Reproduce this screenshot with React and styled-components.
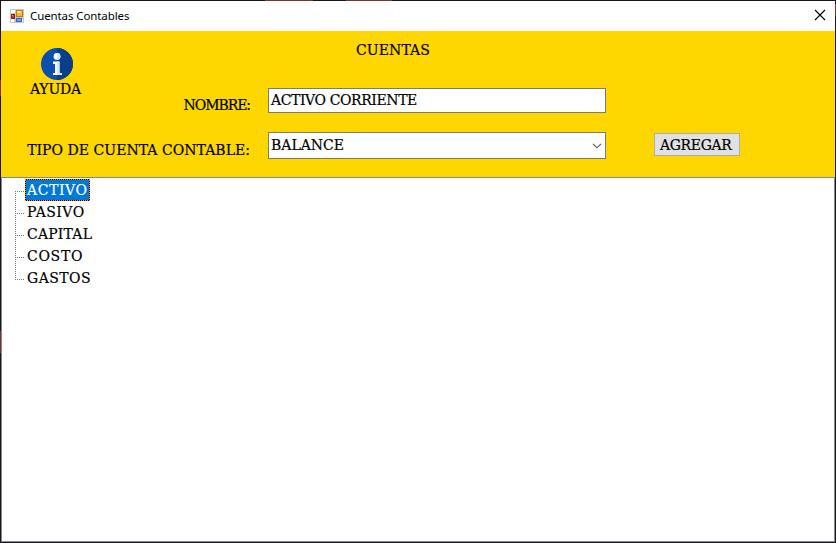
import React from "react";
import styled, { createGlobalStyle } from "styled-components";

const GlobalStyle = createGlobalStyle`
  * { box-sizing: border-box; }
  body { margin: 0; background: #19191d; }
`;

const Window = styled.main`
  width: 836px;
  height: 543px;
  padding: 1px;
  display: flex;
  flex-direction: column;
  overflow: hidden;
  color: #000;
  background:
    linear-gradient(#7b3529, #7b3529) 265px 0 / 48px 1px no-repeat,
    linear-gradient(#7b3529, #7b3529) 346px 0 / 46px 1px no-repeat,
    linear-gradient(#7b3529, #7b3529) 0 80px / 1px 16px no-repeat,
    linear-gradient(#7b3529, #7b3529) 0 331px / 1px 22px no-repeat,
    linear-gradient(#7b3529, #7b3529) 835px 4px / 1px 12px no-repeat,
    #19191d;
`;

const TitleBar = styled.header`
  height: 30px;
  flex: none;
  display: flex;
  align-items: center;
  padding: 0 9px;
  background: #fff;
`;

const Title = styled.h1`
  flex: 1;
  margin: 0 0 0 6px;
  font: 400 11.5px/16px "Noto Sans", sans-serif;
  letter-spacing: -0.1px;
  white-space: nowrap;
`;

const CloseButton = styled.button`
  width: 12px;
  height: 12px;
  padding: 0;
  border: 0;
  margin-top: -2px;
  background: none;
  display: flex;
`;

const Panel = styled.section`
  height: 146px;
  flex: none;
  display: flex;
  align-items: flex-start;
  background: #ffd700;
`;

const Slab = styled.span`
  font: 400 14px/20px "DejaVu Serif", serif;
  letter-spacing: ${(p) => p.$track || 0}px;
  -webkit-text-stroke: 0.2px currentColor;
  white-space: nowrap;
`;

const Side = styled.div`
  width: 112px;
  margin-right: -112px;
  display: flex;
  flex-direction: column;
  align-items: center;
  padding-top: 17px;
`;

const HelpLabel = styled(Slab)`
  margin: -1px 3px 0 0;
`;

const Form = styled.div`
  width: 605px;
  display: grid;
  grid-template-columns: 249px 338px;
  column-gap: 18px;
  grid-template-rows: 57px 44px 28px;
`;

const Heading = styled(Slab)`
  grid-column: 2;
  padding: 9px 0 0 88px;
`;

const Label = styled(Slab)`
  justify-self: end;
  margin-top: ${(p) => p.$top}px;
`;

const Field = styled.div`
  height: ${(p) => p.$height}px;
  border: 1px solid #7a7a7a;
  background: #fff;
  display: flex;
  align-items: ${(p) => (p.$height > 25 ? "center" : "flex-start")};
  justify-content: space-between;
  padding: 0 3px 0 2px;
`;

const FieldText = styled(Slab)`
  margin-top: ${(p) => p.$top}px;
`;

const AddButton = styled.button`
  margin: 102px 0 0 48px;
  width: 86px;
  height: 23px;
  padding: 0 0 0 5px;
  border: 1px solid #adadad;
  background: #e1e1e1;
  color: #000;
  display: flex;
  align-items: center;
`;

const TreePane = styled.section`
  flex: 1;
  border: 1px solid #828790;
  background: #fff;
  padding: 1px 0 0 13px;
`;

const Tree = styled.ul`
  margin: 0;
  padding: 0;
  list-style: none;
`;

const Node = styled.li`
  height: 22px;
  display: flex;
  align-items: center;
`;

const Branch = styled.svg`
  width: 9px;
  height: 22px;
  margin-right: 1px;
  flex: none;
`;

const NodeText = styled(Slab)`
  height: 22px;
  padding: 0 1px;
  border: 1px ${(p) => (p.$selected ? "dotted #ff8728" : "solid transparent")};
  background: ${(p) =>
    p.$selected
      ? "linear-gradient(#0078d7, #0078d7) padding-box, linear-gradient(#000, #000) border-box"
      : "transparent"};
  color: ${(p) => (p.$selected ? "#fff" : "#000")};
`;

const accounts = [
  { name: "ACTIVO", track: 0.6 },
  { name: "PASIVO", track: 0.5 },
  { name: "CAPITAL", track: 0.2 },
  { name: "COSTO", track: 0.7 },
  { name: "GASTOS", track: 0.45 },
];

function FormIcon() {
  return (
    <svg width="14" height="14" viewBox="0 0 14 14" shapeRendering="crispEdges">
      <path d="M0 0h14v14H0z" fill="#c6c6c6" />
      <path d="M1 1h4v3H1zM1 10h3v3H1zM12 10h1v3h-1z" fill="#fff" />
      <path d="M6 1h7v7H6z" fill="#c57a10" />
      <path d="M7 2h5v5H7z" fill="#f6b82e" />
      <path d="M7 2h4v2H7z" fill="#ffe48a" />
      <path d="M1 5h4v5H1z" fill="#971a12" />
      <path d="M2 6h2v3H2z" fill="#cb402d" />
      <path d="M2 6h1v1H2z" fill="#ef8978" />
      <path d="M6 9h6v4H6z" fill="#3264c8" />
      <path d="M7 10h4v2H7z" fill="#6ea4f2" />
    </svg>
  );
}

function InfoIcon() {
  return (
    <svg width="32" height="32" viewBox="0 0 32 32">
      <circle cx="16" cy="16" r="16" fill="#0b50b0" />
      <path d="M16 0a16 16 0 0 1 0 32z" fill="#083f88" />
      <circle cx="16" cy="8.4" r="3.4" fill="#fff" />
      <path d="M16 5a3.4 3.4 0 0 1 0 6.8z" fill="#cfeafc" />
      <path d="M12 13.5h6.5V25H21v2h-9v-2h2v-9h-2z" fill="#fff" />
      <path d="M16 13.5h2.5V25H21v2h-5z" fill="#cfeafc" />
    </svg>
  );
}

export default function App() {
  return (
    <>
      <GlobalStyle />
      <Window>
        <TitleBar>
          <FormIcon />
          <Title>Cuentas Contables</Title>
          <CloseButton aria-label="Cerrar">
            <svg width="12" height="12" viewBox="0 0 12 12">
              <path d="M1 1l10 10M11 1L1 11" stroke="#000" strokeWidth="1.1" />
            </svg>
          </CloseButton>
        </TitleBar>
        <Panel>
          <Side>
            <InfoIcon />
            <HelpLabel $track={-0.15}>AYUDA</HelpLabel>
          </Side>
          <Form>
            <Heading $track={0.1}>CUENTAS</Heading>
            <Label $top={7} $track={-1.05}>NOMBRE:</Label>
            <Field $height={25}>
              <FieldText $top={1} $track={-0.4}>ACTIVO CORRIENTE</FieldText>
            </Field>
            <Label $top={8} $track={0.04}>TIPO DE CUENTA CONTABLE:</Label>
            <Field $height={27}>
              <FieldText $top={-1}>BALANCE</FieldText>
              <svg width="10" height="6" viewBox="0 0 10 6">
                <path d="M1 .8l4 4 4-4" fill="none" stroke="#555" strokeWidth="1.1" />
              </svg>
            </Field>
          </Form>
          <AddButton>
            <Slab $track={-0.35}>AGREGAR</Slab>
          </AddButton>
        </Panel>
        <TreePane>
          <Tree>
            {accounts.map((a, i) => (
              <Node key={a.name}>
                <Branch viewBox="0 0 9 22" shapeRendering="crispEdges">
                  <path
                    d={`M.5 ${i === 0 ? 12 : 0}V${i === accounts.length - 1 ? 12 : 22}M0 12.5H9`}
                    stroke="#777"
                    strokeDasharray="1 1"
                  />
                </Branch>
                <NodeText $selected={i === 0} $track={a.track}>{a.name}</NodeText>
              </Node>
            ))}
          </Tree>
        </TreePane>
      </Window>
    </>
  );
}
